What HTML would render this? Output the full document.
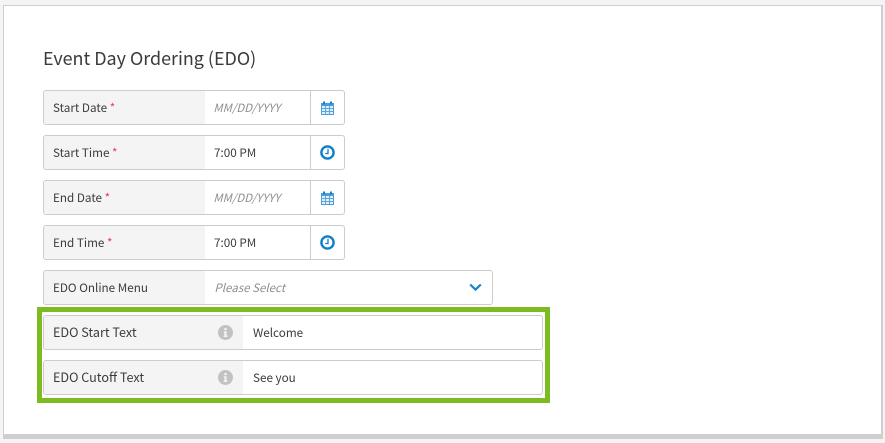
<!DOCTYPE html>
<html>
<head>
<meta charset="utf-8">
<style>
html,body{margin:0;padding:0;width:885px;height:443px;overflow:hidden;background:#f4f4f4}
body{position:relative;font-family:"Noto Sans CJK SC","Liberation Sans",sans-serif;color:#3c3c3c;font-size:11.7px}
.panel{position:absolute;left:3px;top:5px;width:877px;height:428px;background:#fff;border:1px solid #cfcfcf;border-right-width:2px;border-bottom-width:5px}
h1{position:absolute;left:43px;top:44px;margin:0;font-weight:400;font-size:17.92px;line-height:28px;color:#3a3a3a;white-space:nowrap}
.f{position:absolute;left:43px;width:300px;height:33px;border:1px solid #cccccc;border-radius:3px;background:#fff;overflow:hidden}
.l{position:absolute;left:0;top:0;width:152px;height:33px;background:#f4f4f4;line-height:33px;padding-left:9px;white-space:nowrap}
.l b{font-weight:400;color:#e8405f}
.v{position:absolute;left:170px;top:0;line-height:33px;white-space:nowrap}
.p{font-style:italic;color:#8f8f8f;font-size:11.4px;left:169.4px;top:1px}
.d{position:absolute;left:266px;top:0;width:1px;height:33px;background:#cccccc}
.f svg{position:absolute}
.wide{width:448px}
.text{width:498px}
.text .l{width:190px;font-size:12.6px;line-height:31px}
.text .v{left:209px}
.green{position:absolute;left:37px;top:307px;width:503px;height:86px;border:5px solid #7cbc21}
</style>
</head>
<body>
<div class="panel"></div>
<h1>Event Day Ordering (EDO)</h1>

<div class="f" style="top:90px"><div class="l">Start Date <b>*</b></div><div class="v p">MM/DD/YYYY</div><div class="d"></div>
<svg style="left:277px;top:10px" width="13" height="14" viewBox="0 0 13 14"><path d="M0.5 2.5H12.5V13.5H0.5Z" fill="#e2effa" stroke="#4b9ed8"/><path d="M0 2H13V5H0Z" fill="#4b9ed8"/><path d="M3 0.5V3.5M10 0.5V3.5" stroke="#1f80c6" stroke-width="2"/><path d="M4.5 5V13M8.5 5V13M1 7.5H12M1 10.5H12" stroke="#5aa7dd" stroke-width="1"/></svg></div>

<div class="f" style="top:135px"><div class="l">Start Time <b>*</b></div><div class="v">7:00 PM</div><div class="d"></div>
<svg style="left:276px;top:9px" width="15" height="15" viewBox="0 0 15 15"><circle cx="7.5" cy="7.5" r="6.1" fill="#fff" stroke="#0f7fc8" stroke-width="2.4"/><path d="M8 3.8V8.5H5.2" fill="none" stroke="#0f7fc8" stroke-width="1.3"/></svg></div>

<div class="f" style="top:180px"><div class="l">End Date <b>*</b></div><div class="v p">MM/DD/YYYY</div><div class="d"></div>
<svg style="left:277px;top:10px" width="13" height="14" viewBox="0 0 13 14"><path d="M0.5 2.5H12.5V13.5H0.5Z" fill="#e2effa" stroke="#4b9ed8"/><path d="M0 2H13V5H0Z" fill="#4b9ed8"/><path d="M3 0.5V3.5M10 0.5V3.5" stroke="#1f80c6" stroke-width="2"/><path d="M4.5 5V13M8.5 5V13M1 7.5H12M1 10.5H12" stroke="#5aa7dd" stroke-width="1"/></svg></div>

<div class="f" style="top:225px"><div class="l">End Time <b>*</b></div><div class="v">7:00 PM</div><div class="d"></div>
<svg style="left:276px;top:9px" width="15" height="15" viewBox="0 0 15 15"><circle cx="7.5" cy="7.5" r="6.1" fill="#fff" stroke="#0f7fc8" stroke-width="2.4"/><path d="M8 3.8V8.5H5.2" fill="none" stroke="#0f7fc8" stroke-width="1.3"/></svg></div>

<div class="f wide" style="top:270px"><div class="l">EDO Online Menu</div><div class="v p" style="left:170.4px;font-size:11.55px">Please Select</div>
<svg style="left:425px;top:12px" width="13" height="9" viewBox="0 0 13 9"><path d="M1.2 1.5L6.5 6.6L11.8 1.5" fill="none" stroke="#1a82c6" stroke-width="2.2"/></svg></div>

<div class="green"></div>

<div class="f text" style="top:315px"><div class="l">EDO Start Text</div><div class="v">Welcome</div>
<svg style="left:174px;top:9px" width="15" height="15" viewBox="0 0 15 15"><circle cx="7.5" cy="7.5" r="7.5" fill="#c2c2c2"/><rect x="6.4" y="3" width="2.2" height="2.2" fill="#f4f4f4"/><path d="M5.8 6.3H8.6V10.8H9.5V12H5.6V10.8H6.4V7.5H5.8Z" fill="#f4f4f4"/></svg></div>

<div class="f text" style="top:360px"><div class="l">EDO Cutoff Text</div><div class="v">See you</div>
<svg style="left:174px;top:9px" width="15" height="15" viewBox="0 0 15 15"><circle cx="7.5" cy="7.5" r="7.5" fill="#c2c2c2"/><rect x="6.4" y="3" width="2.2" height="2.2" fill="#f4f4f4"/><path d="M5.8 6.3H8.6V10.8H9.5V12H5.6V10.8H6.4V7.5H5.8Z" fill="#f4f4f4"/></svg></div>
</body>
</html>
